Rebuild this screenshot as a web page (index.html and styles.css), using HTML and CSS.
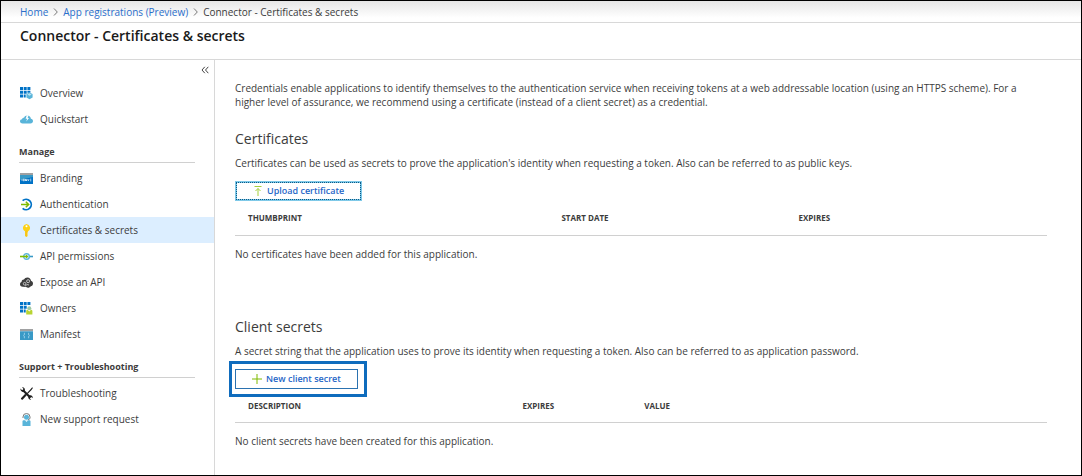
FILE: index.html
```html
<!DOCTYPE html>
<html lang="en">
<head>
    <meta charset="UTF-8">
    <meta name="viewport" content="width=device-width, initial-scale=1.0">
    <title>Connector - Certificates &amp; secrets</title>
    <link rel="stylesheet" href="styles.css">
</head>
<body>
    <nav class="breadcrumb">
        <a href="#">Home</a>
        <svg class="chevron" viewBox="0 0 5 8"><path d="M1 .5 4.3 4 1 7.5"/></svg>
        <a href="#">App registrations (Preview)</a>
        <svg class="chevron" viewBox="0 0 5 8"><path d="M1 .5 4.3 4 1 7.5"/></svg>
        <span>Connector - Certificates &amp; secrets</span>
    </nav>

    <header class="title-bar">
        <h1>Connector - Certificates &amp; secrets</h1>
    </header>

    <div class="layout">
        <aside class="sidebar">
            <button type="button" class="collapse" aria-label="Collapse menu">
                <svg viewBox="0 0 8 8"><path d="M3.8 .8 1 4l2.8 3.2M7.3 .8 4.5 4l2.8 3.2"/></svg>
            </button>

            <ul class="menu">
                <li><a href="#">
                    <svg class="icon" viewBox="0 0 13 13"><path fill="#0072c6" d="M0 0h3v3H0zM3.700 0h3v3h-3zM7.400 0h3v3h-3zM0 3.700h3v3H0zM3.700 3.700h3v3h-3zM7.400 3.700h3v2h-3zM0 7.400h3v3H0zM3.700 7.400h2v3h-2z"/><path fill="#59b4d9" d="m9.500 5.500 3.100 1.600v3.500L9.500 12.300 6.400 10.600V7.100z"/><path fill="#b8e0f2" d="m9.500 6.300 2.200 1.200-2.200 1.200-2.200-1.200z"/></svg>
                    Overview</a></li>
                <li><a href="#">
                    <svg class="icon" viewBox="0 0 13 13"><path fill="#59b4d9" d="M2.600 10.500C1 10.500 0 9.600 0 8.300c0-1.200.9-2 2-2 .1-1 1-1.600 2-1.500C4.600 3.400 5.800 2.500 7.300 2.500c2 0 3.500 1.400 3.600 3.300 1.300.2 2.100 1.100 2.100 2.300 0 1.400-1 2.400-2.500 2.400z"/><path fill="#fff" d="M6.800 2.300 5.600 5.800h1.500L6.300 8.400 9 5H7.600l1-2.700z"/></svg>
                    Quickstart</a></li>
            </ul>

            <h2>Manage</h2>
            <ul class="menu">
                <li><a href="#">
                    <svg class="icon" viewBox="0 0 13 13"><path fill="#a0a1a2" d="M0 1h13v2H0z"/><path fill="#0072c6" d="M0 3h13v9H0z"/><path fill="#3999c6" d="M0 3h13v2L0 8z"/><path stroke="#fff" stroke-width=".7" fill="none" d="M2 7.200v1.600M3.300 7.200h1v1.600h-1zM5.500 9V7.200L6.500 9V7.200M7.600 7.200l.7 1.600.7-1.600M10 7.200h1.300M10 8.800h1.300"/></svg>
                    Branding</a></li>
                <li><a href="#">
                    <svg class="icon" viewBox="0 0 13 13"><path fill="none" stroke="#0072c6" stroke-width="1.800" d="M2.600 2.600A5.200 5.200 0 1 1 2.600 10.400"/><path fill="none" stroke="#7fba00" stroke-width="1.500" d="M1 6.500h7.500M5.800 3.700l2.900 2.800-2.900 2.800"/></svg>
                    Authentication</a></li>
                <li class="active"><a href="#">
                    <svg class="icon" viewBox="0 0 13 13"><path fill="#fcd116" d="M6.500 0a3.900 3.900 0 0 0-1.500 7.300V12l1.500 1L8 11.800l-.9-.9.9-.9-.9-1 .9-.8V7.300A3.900 3.900 0 0 0 6.500 0z"/><circle cx="6.500" cy="2.200" r="1" fill="#fff"/><path stroke="#f0b323" stroke-width=".8" d="M6.200 6.500v5.800"/></svg>
                    Certificates &amp; secrets</a></li>
                <li><a href="#">
                    <svg class="icon" viewBox="0 0 13 13"><path stroke="#7fba00" stroke-width="1.600" d="M0 6.500h4"/><path stroke="#3999c6" stroke-width="1.600" d="M9 6.500h4"/><circle cx="6.500" cy="6.500" r="2.900" fill="#cfe8f5" stroke="#59b4d9" stroke-width="1.300"/><path fill="#7fba00" d="M3 5.700h3V4.500l2.400 2L6 8.500V7.300H3z"/></svg>
                    API permissions</a></li>
                <li><a href="#">
                    <svg class="icon" viewBox="0 0 13 13"><path fill="#3e3e3e" d="M2.700 10.800C1 10.800 0 9.700 0 8.300c0-1.100.6-1.900 1.600-2.200C1.400 4.600 2.600 3.400 4 3.600 4.700 2.300 6 1.500 7.500 1.600c1.900.1 3.300 1.400 3.500 3.100 1.200.4 2 1.400 2 2.700 0 1.500-.9 2.600-2.300 2.800-.9 1.500-3 2-4.500.9z"/><g fill="none" stroke="#ddd" stroke-width=".8"><circle cx="4.600" cy="7.700" r="1.300"/><circle cx="8.100" cy="5.200" r="1.500"/><path d="M5 10.200 7 8.500l2 .5"/></g></svg>
                    Expose an API</a></li>
                <li><a href="#">
                    <svg class="icon" viewBox="0 0 13 13"><path fill="#0072c6" d="M0 0h3v3H0zM3.700 0h3v3h-3zM7.400 0h3v3h-3zM0 3.700h3v3H0zM3.700 3.700h3v3h-3zM0 7.400h3v3H0zM3.700 7.400h2v3h-2z"/><circle cx="9.300" cy="6.300" r="2" fill="#9fc9a5"/><path fill="#b8d432" d="M6.200 12.500V9.200c0-.8.6-1.400 1.400-1.400l1.700 1.600L11 7.800c.8 0 1.400.6 1.400 1.400v3.300z"/></svg>
                    Owners</a></li>
                <li><a href="#">
                    <svg class="icon" viewBox="0 0 13 13"><path fill="#a0a1a2" d="M0 1h13v2.300H0z"/><path fill="#3999c6" d="M0 3.300h13V12H0z"/><path fill="none" stroke="#b8e0f2" stroke-width=".8" d="M5 5c-1 0-.6 1.400-.7 2l-.7.600.7.600c.1.700-.3 1.900.7 1.900M8 5c1 0 .6 1.400.7 2l.7.600-.7.600c-.1.700.3 1.900-.7 1.900"/></svg>
                    Manifest</a></li>
            </ul>

            <h2>Support + Troubleshooting</h2>
            <ul class="menu">
                <li><a href="#">
                    <svg class="icon" viewBox="0 0 13 13"><path stroke="#1e1e1e" stroke-width="2.100" d="M3 3.200 10.500 10.800"/><path fill="#1e1e1e" d="M.4 1.600 1.900 3l1.200-.2.200-1.200L1.900.3C4 0 5.400 1.600 4.800 3.500L3.600 4.800C1.700 5.300.2 3.800.4 1.600zM12.700 11.300l-1.500-1.300-1.100.2-.2 1.200 1.400 1.300c-2.100.2-3.500-1.300-2.900-3.200l1.100-1.200c1.900-.5 3.500.9 3.200 3z"/><path fill="#1e1e1e" d="m12.200.3.700.8-1.400 2L7.600 7l-.8-.8 3.700-4zM5.200 6.800l1.500 1.500-3.900 4.100c-1 .9-2.500-.5-1.600-1.500z"/></svg>
                    Troubleshooting</a></li>
                <li><a href="#">
                    <svg class="icon" viewBox="0 0 13 13"><path fill="none" stroke="#7a7a7a" d="M3 5V4a3.500 3.500 0 0 1 7 0v1.500L8 7"/><circle cx="6.500" cy="4.200" r="2.500" fill="#59b4d9"/><path fill="#59b4d9" d="M2.500 13V8.500c0-.8.6-1.300 1.300-1.300h5.400c.8 0 1.300.5 1.300 1.300V13z"/><path fill="#fff" d="m5 7.200 1.500 1.800L8 7.200z"/></svg>
                    New support request</a></li>
            </ul>
        </aside>

        <main class="content">
            <p class="intro">Credentials enable applications to identify themselves to the authentication service when receiving tokens at a web addressable location (using an HTTPS scheme). For a higher level of assurance, we recommend using a certificate (instead of a client secret) as a credential.</p>

            <section class="certificates">
                <h3>Certificates</h3>
                <p>Certificates can be used as secrets to prove the application's identity when requesting a token. Also can be referred to as public keys.</p>
                <button type="button" class="btn btn-focus">
                    <svg viewBox="0 0 10 10"><path d="M1.500 .5h7M5 10V2.500M2.500 5 5 2.500 7.500 5"/></svg>
                    Upload certificate
                </button>
                <table>
                    <thead>
                        <tr><th class="col-thumbprint">Thumbprint</th><th class="col-start">Start date</th><th>Expires</th></tr>
                    </thead>
                    <tbody>
                        <tr><td colspan="3">No certificates have been added for this application.</td></tr>
                    </tbody>
                </table>
            </section>

            <section class="secrets">
                <h3>Client secrets</h3>
                <p>A secret string that the application uses to prove its identity when requesting a token. Also can be referred to as application password.</p>
                <div class="highlight">
                    <button type="button" class="btn">
                        <svg class="plus" viewBox="0 0 10 10"><path d="M5 0v10M0 5h10"/></svg>
                        New client secret
                    </button>
                </div>
                <table>
                    <thead>
                        <tr><th class="col-description">Description</th><th class="col-expires">Expires</th><th>Value</th></tr>
                    </thead>
                    <tbody>
                        <tr><td colspan="3">No client secrets have been created for this application.</td></tr>
                    </tbody>
                </table>
            </section>
        </main>
    </div>
</body>
</html>
```

FILE: styles.css
```css
* {
    box-sizing: border-box;
}

body {
    margin: 0;
    min-height: 100vh;
    display: flex;
    flex-direction: column;
    border: 1px solid #000;
    background-color: #fff;
    color: #3c3c3c;
    font-family: "Open Sans", "Noto Sans", sans-serif;
    font-size: 10px;
    line-height: 14px;
}

h1, h2, h3, p, ul {
    margin: 0;
    padding: 0;
}

a {
    color: inherit;
    text-decoration: none;
}

button {
    font: inherit;
    cursor: pointer;
}

/* Top bars */
.breadcrumb {
    display: flex;
    align-items: center;
    gap: 5px;
    height: 22px;
    padding: 0 19px;
    border-bottom: 1px solid #d8d8d8;
    background: linear-gradient(#e6e6e6, #fff 80%);
}

.breadcrumb a {
    color: #2a6ecb;
}

.chevron {
    width: 5px;
    height: 8px;
    fill: none;
    stroke: #777;
}

.title-bar {
    height: 37px;
    padding: 4px 19px;
    border-bottom: 1px solid #d8d8d8;
}

h1 {
    color: #1a1a1a;
    font-size: 14px;
    font-weight: 600;
    line-height: 18px;
}

.layout {
    display: flex;
    flex: 1;
}

/* Left menu */
.sidebar {
    flex: 0 0 214px;
    border-right: 1px solid #d8d8d8;
}

.collapse {
    display: flex;
    margin-left: auto;
    padding: 6px 5px;
    border: 0;
    background: none;
}

.collapse svg {
    width: 8px;
    height: 8px;
    fill: none;
    stroke: #444;
}

.menu {
    list-style: none;
}

.menu a {
    display: flex;
    align-items: center;
    gap: 7px;
    height: 26px;
    padding-left: 19px;
}

.menu .active {
    background-color: #dceeff;
}

.icon {
    width: 13px;
    height: 13px;
}

h2 {
    margin: 13px 19px 2px 18px;
    padding-bottom: 3px;
    border-bottom: 1px solid #d0d0d0;
    font-size: 9px;
    font-weight: 700;
    line-height: 14px;
}

/* Right side */
.content {
    flex: 1;
    padding: 21px 34px 12px 20px;
}

.intro {
    margin-bottom: 21px;
}

h3 {
    margin-bottom: 8px;
    font-size: 14px;
    font-weight: 400;
    line-height: 18px;
}

.btn {
    display: flex;
    align-items: center;
    justify-content: center;
    gap: 4px;
    height: 20px;
    padding: 0 16px;
    border: 1px solid #2b72b0;
    background-color: #fff;
    color: #1f66c7;
    font-size: 9px;
    font-weight: 600;
}

.btn svg {
    width: 10px;
    height: 10px;
    fill: none;
    stroke: #a4cf3b;
}

.btn .plus {
    stroke: #7fba00;
}

.btn-focus {
    margin-top: 11px;
    border: 2px solid #7fc9e8;
    outline: 1px dotted #0b5a87;
    outline-offset: -2px;
}

.highlight {
    width: fit-content;
    margin: 3px 0 0 -6px;
    padding: 5px 6px 5px 3px;
    border: 3px solid #0f6cbd;
}

table {
    width: 100%;
    border-collapse: collapse;
    table-layout: fixed;
}

th {
    padding: 10px 0 10px 13px;
    border-bottom: 1px solid #d0d0d0;
    font-size: 8px;
    font-weight: 700;
    line-height: 14px;
    text-align: left;
    text-transform: uppercase;
}

td {
    padding: 11px 0;
}

.col-thumbprint {
    width: 38.6%;
}

.col-start {
    width: 29.2%;
}

.col-description {
    width: 33.8%;
}

.col-expires {
    width: 15%;
}

.secrets {
    margin-top: 46px;
}

.secrets th {
    padding: 2px 0 9px 13px;
}
```
